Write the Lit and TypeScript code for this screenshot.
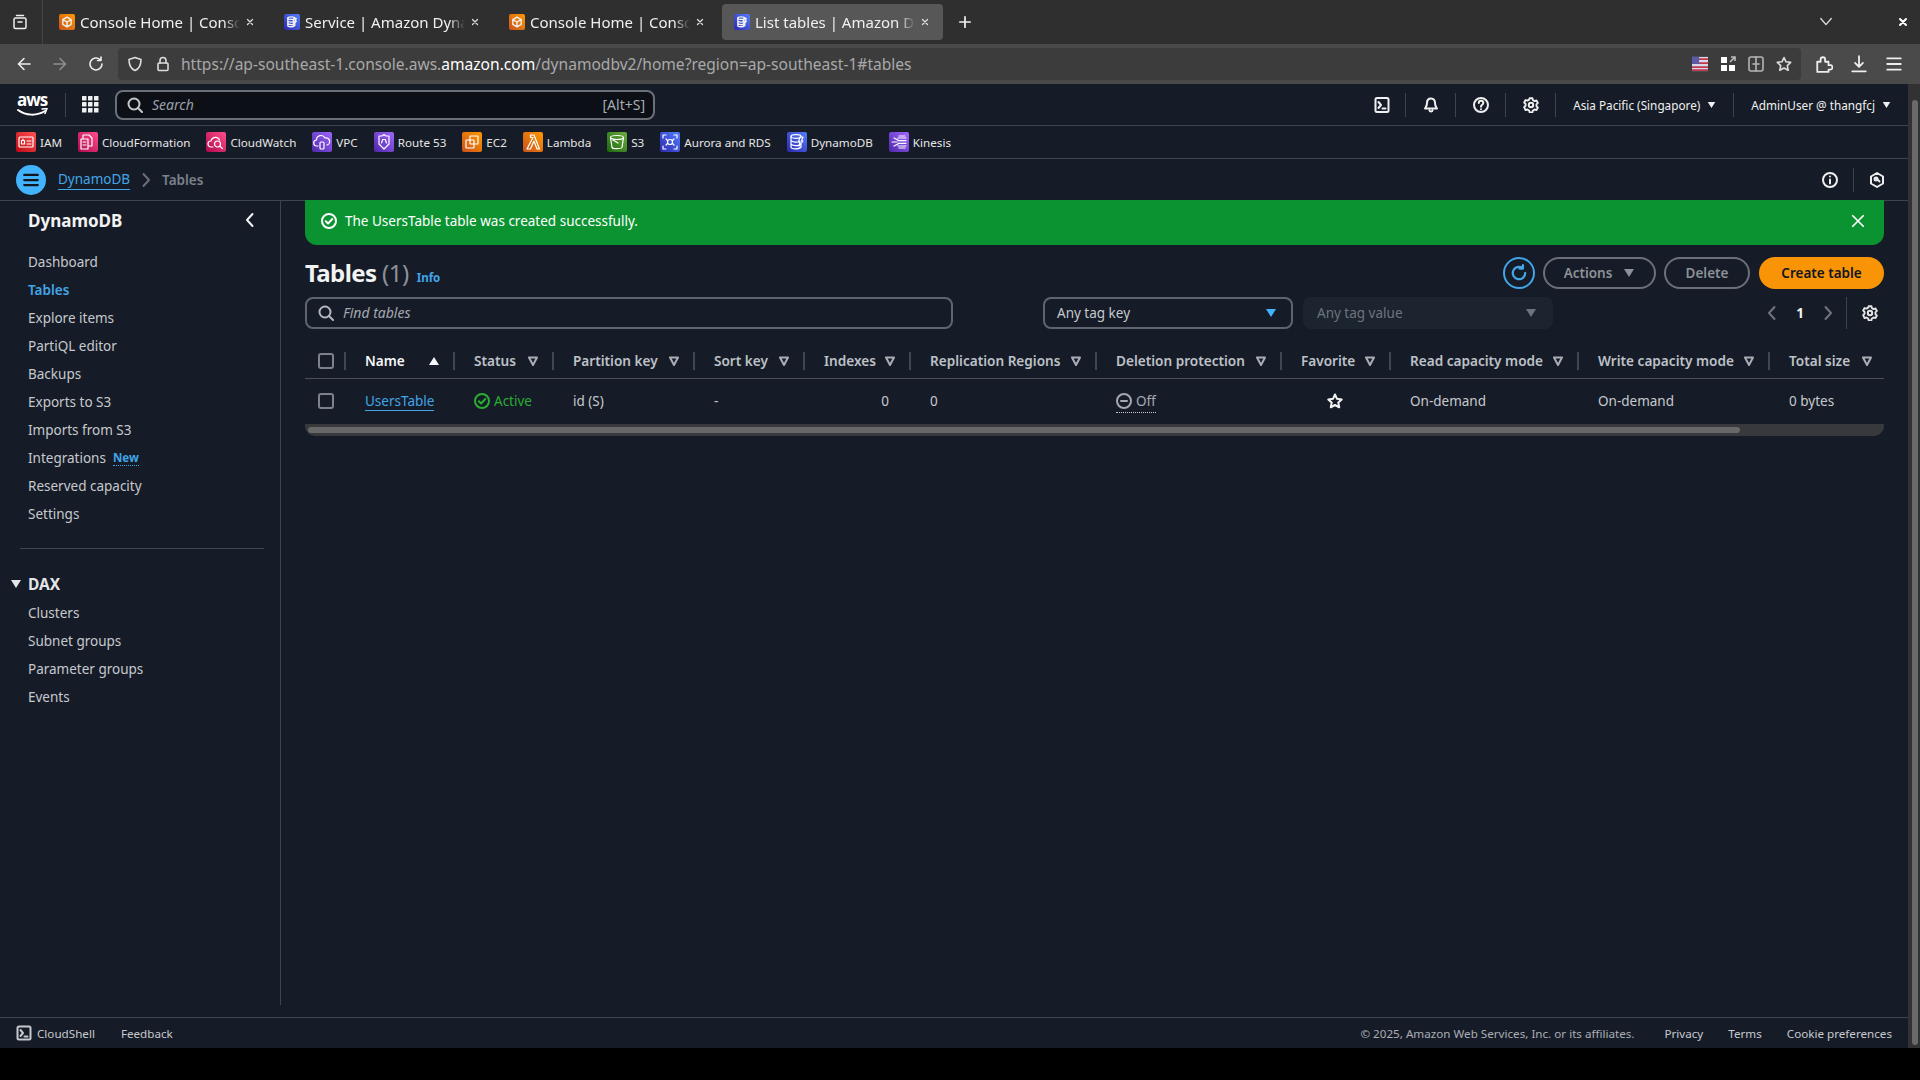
import { LitElement, html, css, svg } from "lit";
import { customElement } from "lit/decorators.js";

const ic = (body: unknown, size = 16, vb = "0 0 16 16", cls = "") =>
  html`<svg class=${cls} width=${size} height=${size} viewBox=${vb} fill="none" stroke="currentColor" stroke-width="2" stroke-linecap="round" stroke-linejoin="round">${body}</svg>`;

const glyph: Record<string, unknown> = {
  iam: svg`<rect x="3" y="5" width="14" height="10" rx="1"/><rect x="5.5" y="8.5" width="3" height="3.5"/><path d="M7 8.5V7M11 9h4M11 12h4"/>`,
  cfn: svg`<path d="M5 6V3h6l3 3v8h-3M3 7h7v10H3zM5 10h3M5 13h3"/>`,
  cw: svg`<path d="M7 15H5a3 3 0 0 1 0-6 4.5 4.5 0 0 1 8.5-1"/><circle cx="11.5" cy="12" r="3"/><path d="M14 14.5l2.5 2"/>`,
  vpc: svg`<path d="M6 14H5a3 3 0 0 1-.5-6A4.5 4.5 0 0 1 13 6a3.5 3.5 0 0 1 2 7"/><rect x="8" y="10" width="4" height="7" rx="1"/>`,
  r53: svg`<path d="M10 2.5l2 1.5h3v8l-5 5-5-5V4h3z"/><path d="M7.5 11l1.2-3.5h2.6L12.5 11"/>`,
  ec2: svg`<rect x="8" y="4" width="8" height="8" rx=".5"/><rect x="4" y="8" width="8" height="8" rx=".5"/>`,
  lam: svg`<path d="M4 17h3.5L11 9l3 8h2.5L11 3H7.5v2.5H10L4 17z"/>`,
  s3: svg`<ellipse cx="10" cy="5.5" rx="6.5" ry="2"/><path d="M3.5 5.5L5 15.5c.5 1.5 9 1.5 10 0l1.500-10M6 8l5 3"/>`,
  rds: svg`<circle cx="10" cy="10" r="2.500"/><path d="M3 6V3h3M14 3h3v3M3 14v3h3M17 14v3h-3M6 7l1.500 1.500M14 7l-1.500 1.500M6 13l1.500-1.500M14 13l-1.500-1.500"/>`,
  ddb: svg`<ellipse cx="9" cy="4.500" rx="5" ry="1.800"/><path d="M4 4.500V15c0 2.400 8 2.400 10 0V12M4 8.500c1 2 7 2 9 1M4 12c1 2 7 2 8 1M13 5l3 0-1.500 4H16l-4 5 1-4h-1.500z"/>`,
  kin: svg`<path d="M3 10h5M5 6l4 2M5 14l4-2M9 6h8M9 8.700h8M9 11.300h8M9 14h8M10 4h6M10 16h6"/>`,
  cube: svg`<path d="M10 3l6 3.500v7L10 17l-6-3.500v-7zM4 6.500l6 3.500 6-3.500M10 10v7"/>`,
};

const favs: [string, string, string][] = [
  ["IAM", "iam", "red"], ["CloudFormation", "cfn", "pink"], ["CloudWatch", "cw", "pink"],
  ["VPC", "vpc", "purple"], ["Route 53", "r53", "purple"], ["EC2", "ec2", "orange"],
  ["Lambda", "lam", "orange"], ["S3", "s3", "green"], ["Aurora and RDS", "rds", "indigo"],
  ["DynamoDB", "ddb", "indigo"], ["Kinesis", "kin", "purple"],
];

const tabs: [string, string, string, boolean][] = [
  ["Console Home | Console Home", "cube", "orange", false],
  ["Service | Amazon DynamoDB", "ddb", "indigo", false],
  ["Console Home | Console Home", "cube", "orange", false],
  ["List tables | Amazon DynamoDB", "ddb", "indigo", true],
];

const cols: [string, number][] = [
  ["Name", 109], ["Status", 99], ["Partition key", 141], ["Sort key", 110], ["Indexes", 106],
  ["Replication Regions", 186], ["Deletion protection", 185], ["Favorite", 109],
  ["Read capacity mode", 188], ["Write capacity mode", 191], ["Total size", 116],
];

const nav1 = ["Dashboard", "Tables", "Explore items", "PartiQL editor", "Backups", "Exports to S3", "Imports from S3", "Integrations", "Reserved capacity", "Settings"];
const nav2 = ["Clusters", "Subnet groups", "Parameter groups", "Events"];

const filterIcon = html`<svg class="filt" width="12" height="12" viewBox="0 0 12 12"><path d="M2 2.500h8L6 10z" fill="none" stroke="currentColor" stroke-width="2" stroke-linejoin="round"/></svg>`;
const caret = (cls = "") => html`<svg class=${cls} width="12" height="10" viewBox="0 0 12 10"><path d="M1 1h10L6 9z" fill="currentColor"/></svg>`;
const gear = (s = 16) => ic(svg`<circle cx="8" cy="8" r="2.200"/><path d="M6.500 1h3l.5 2 1.800 1 2-.6 1.500 2.600-1.500 1.500v2l1.500 1.500-1.500 2.600-2-.6-1.800 1-.5 2h-3l-.5-2-1.800-1-2 .6L.7 10.500 2.200 9V7L.7 5.500l1.500-2.600 2 .6L6 2.500z" transform="translate(.5 .3) scale(.94)"/>`, s);
const check = (s = 16) => ic(svg`<circle cx="8" cy="8" r="7"/><path d="M4.800 8.200l2.300 2.300 4.200-4.500"/>`, s);
const search = (s = 16) => ic(svg`<circle cx="7" cy="7" r="5.500"/><path d="M11 11l4 4"/>`, s);

@customElement("app-root")
export class AppRoot extends LitElement {
  static styles = css`
    :host { display: block; width: 1920px; height: 1080px; background: #000; overflow: hidden;
      font-family: "Noto Sans", sans-serif; font-size: 13.500px; color: #d1d5db; }
    * { box-sizing: border-box; }
    svg { display: block; flex: none; }
    .tabbar { height: 44px; background: #2f2f2f; display: flex; align-items: center; color: #f0f0f0; }
    .tabmgr { width: 43px; height: 44px; border-right: 1px solid #444; margin-right: 4px; display: flex; align-items: center; justify-content: center; }
    .tabmgr svg { margin-left: -2px; stroke-width: 1.500; }
    .tab { width: 225px; height: 36px; border-radius: 4px; display: flex; align-items: center; padding-left: 12px; font-size: 15px; }
    .tab.on { background: #575757; width: 221px; }
    .tab .fav { width: 16px; height: 16px; border-radius: 2px; padding: 1px; }
    .tab .tt { width: 160px; margin-left: 5px; white-space: nowrap; overflow: hidden; -webkit-mask-image: linear-gradient(90deg, #000 90%, transparent); mask-image: linear-gradient(90deg, #000 90%, transparent); }
    .tab .x { margin-left: 5px; color: #ddd; }
    .tab .x svg { width: 10px; height: 10px; stroke-width: 1.500; }
    .plus { margin-left: 16px; }
    .tabend { margin-left: auto; display: flex; align-items: center; }
    .tabend .chev { margin-right: 64px; color: #ddd; }
    .tabend .chev svg { stroke-width: 1.500; }
    .tabend .cl { margin-right: 11px; color: #fff; }

    .toolbar { height: 40px; background: #4a4a4a; display: flex; align-items: center; color: #eee; padding-left: 16px; }
    .toolbar .nav { width: 36px; display: flex; }
    .toolbar .dim { color: #8e8e8e; }
    .toolbar svg { stroke-width: 1.600; }
    .url { width: 1683px; height: 32px; margin-left: -6px; background: #3c3c3c; border-radius: 4px; display: flex; align-items: center; padding-left: 9px; color: #ddd; }
    .url .lock { margin-left: 12px; }
    .url .u { margin-left: 10px; font-size: 15.570px; color: #a9a9a9; white-space: nowrap; }
    .url .u b { font-weight: 400; color: #fff; }
    .url .ext { margin-left: auto; display: flex; align-items: center; gap: 12px; padding-right: 9px; }
    .ext svg { width: 16px; height: 16px; }
    .ext .dimx { color: #b5b5b5; }
    .tools { display: flex; align-items: center; gap: 17px; padding-left: 14px; }

    .app { height: 964px; display: flex; background: #161c27; }
    .console { width: 1908px; display: flex; flex-direction: column; }
    .vs { width: 12px; background: #323232; padding: 16px 2px 3px 4px; }
    .vs i { display: block; height: 100%; width: 6px; border-radius: 3px; background: #6a6a6a; }

    .hdr { height: 42px; flex: none; border-bottom: 1px solid #3f4550; display: flex; align-items: center; padding-left: 17px; color: #f0f0f0; }
    .aws { width: 31px; height: 30px; position: relative; color: #fff; font: 700 17px/20px "Open Sans", sans-serif; letter-spacing: -1px; }
    .aws svg { position: absolute; left: 0; top: 18px; }
    .vsep { width: 1px; height: 24px; background: #3f4550; flex: none; }
    .sb { width: 540px; height: 30px; margin-left: 16px; border: 2px solid #6b6f78; border-radius: 8px; background: #0c0f16; display: flex; align-items: center; padding: 0 8px 0 10px; color: #c6c9ce; }
    .sb em { margin-left: 9px; font-size: 14px; color: #9ba0a8; }
    .sb span { margin-left: auto; font-size: 14px; color: #a8acb3; }
    .hr { margin-left: auto; display: flex; align-items: center; font-size: 11.750px; height: 100%; }
    .hr .ib { width: 49px; display: flex; justify-content: center; }
    .hr .ib.t { width: 47px; }
    .hr .tx { display: flex; align-items: center; gap: 7px; }
    .hr .tx svg { width: 9px; height: 8px; }

    .favs { height: 33px; flex: none; border-bottom: 1px solid #3f4550; display: flex; align-items: center; padding-left: 16px; gap: 16px; font-size: 11.650px; color: #e6e6e6; }
    .f { display: flex; align-items: center; gap: 4px; white-space: nowrap; }
    .fi { width: 20px; height: 20px; border-radius: 2px; color: #fff; }
    .fi svg { width: 100%; height: 100%; stroke-width: 1.200; }
    .red { background: linear-gradient(45deg, #bd0816, #ff5252); }
    .pink { background: linear-gradient(45deg, #b0084d, #ff4f8b); }
    .purple { background: linear-gradient(45deg, #4d27a8, #a166ff); }
    .orange { background: linear-gradient(45deg, #c8511b, #ff9900); }
    .green { background: linear-gradient(45deg, #1b660f, #6cae3e); }
    .indigo { background: linear-gradient(45deg, #2e27ad, #527fff); }

    .crumb { height: 42px; flex: none; border-bottom: 1px solid #3f4550; display: flex; align-items: center; padding-left: 16px; }
    .burger { width: 30px; height: 30px; border-radius: 50%; background: #42b4ff; display: flex; align-items: center; justify-content: center; color: #10151f; }
    .crumb a { margin-left: 12px; color: #42a5e8; border-bottom: 1px solid #42a5e8; line-height: 19px; }
    .crumb .sepc { margin-left: 8px; color: #6b6f78; }
    .crumb .cur { margin-left: 8px; font-weight: 600; font-size: 13.500px; color: #7c818a; }
    .crumb .rt { margin-left: auto; display: flex; align-items: center; color: #eee; padding-right: 23px; }
    .crumb .rt .vsep { margin: 0 15px; }

    .body { flex: 1; display: flex; min-height: 0; }
    .side { width: 281px; flex: none; border-right: 1px solid #3f4550; margin-bottom: 12px; }
    .stitle { height: 38px; display: flex; align-items: center; justify-content: space-between; padding: 0 22px 0 28px; font-size: 17px; font-weight: 700; color: #f2f3f3; }
    .navl { margin-top: 9px; }
    .navl.b { margin-top: 1px; }
    .nv { height: 28px; line-height: 28px; padding-left: 28px; color: #c6c9ce; display: flex; align-items: center; }
    .nv.on { color: #42a5e8; font-weight: 600; }
    .nv u { margin-left: 7px; text-decoration: none; color: #42a5e8; font-size: 11.500px; font-weight: 700; border-bottom: 1px dotted #42a5e8; line-height: 15px; }
    .sdiv { height: 1px; margin: 20px 16px 21px 20px; background: #3f4550; }
    .dax { height: 28px; display: flex; align-items: center; font-size: 15.500px; font-weight: 700; color: #e3e5e8; padding-left: 10px; }
    .dax svg { margin-right: 6px; }

    .main { flex: 1; min-width: 0; padding: 0 24px 0 24px; }
    .banner { height: 45px; margin-top: -1px; background: #0b9332; border-radius: 0 0 12px 12px; display: flex; align-items: center; padding: 0 18px 3px 16px; color: #fff; font-size: 13.500px; }
    .banner span { margin-left: 8px; }
    .banner .cl { margin-left: auto; margin-right: 1px; }
    .ptop { display: flex; align-items: center; height: 32px; margin-top: 12px; }
    .ptitle { font-size: 24px; font-weight: 700; color: #f2f3f3; line-height: 32px; letter-spacing: -0.6px; }
    .ptitle span { font-weight: 400; color: #8d9199; letter-spacing: -0.5px; }
    .inf { margin-left: 8px; margin-top: 8px; color: #42a5e8; font-size: 11.500px; font-weight: 700; }
    .acts { margin-left: auto; display: flex; align-items: center; gap: 8px; }
    .btn { height: 32px; border: 2px solid #6b6f78; border-radius: 16px; display: flex; align-items: center; justify-content: center; font-weight: 600; font-size: 13.500px; color: #8d9199; padding-bottom: 1px; }
    .btn.ref { width: 32px; border-color: #42a5e8; color: #42a5e8; }
    .btn.act { width: 113px; gap: 11px; }
    .btn.del { width: 86px; }
    .btn.pri { width: 125px; margin-left: 1px; border: 0; background: #f89406; color: #10151f; }
    .pfil { display: flex; align-items: center; height: 32px; margin-top: 8px; font-size: 13.500px; }
    .find { width: 648px; height: 32px; border: 2px solid #5f6570; border-radius: 8px; display: flex; align-items: center; padding: 0 0 1px 11px; color: #b4b7bd; }
    .find em { margin-left: 9px; font-size: 14px; color: #a4a8af; }
    .sel { width: 250px; height: 32px; margin-left: 90px; border: 2px solid #5f6570; border-radius: 8px; display: flex; align-items: center; justify-content: space-between; padding: 0 14px 1px 12px; color: #c6c9ce; }
    .sel svg { color: #42b4ff; }
    .sel.dis { margin-left: 10px; border: 0; background: #1c2430; color: #6f747c; padding: 0 16px 1px 14px; }
    .sel.dis svg { color: #6f747c; }
    .pager { margin-left: auto; display: flex; align-items: center; height: 32px; color: #6f747c; }
    .pager b { width: 40px; text-align: center; color: #f2f3f3; font-size: 13.500px; font-weight: 700; }
    .pager .vsep { height: 32px; margin: 0 15px 0 10px; background: #3f4550; }
    .pager .g { color: #e6e6e6; margin-right: 6px; }

    .th { display: flex; height: 35px; margin-top: 15px; border-bottom: 1px solid #4a4f5a; align-items: center; }
    .c0 { width: 39px; flex: none; padding-left: 13px; display: flex; align-items: center; height: 100%; }
    .box { width: 16px; height: 16px; border: 2px solid #7c818a; border-radius: 3px; }
    .hc { flex: none; height: 18px; display: flex; align-items: center; justify-content: space-between; padding: 0 13px 0 19px; border-left: 2px solid #414752; font-weight: 600; font-size: 13.600px; line-height: 16px; color: #bdc1c7; white-space: nowrap; }
    .hc:last-child { padding-right: 11px; }
    .hc.first { color: #f5f6f7; }
    .filt { color: #a9adb4; }
    .tr { display: flex; height: 45px; align-items: center; color: #c6c9ce; padding-bottom: 1px; }
    .td { flex: none; padding-left: 21px; white-space: nowrap; display: flex; align-items: center; }
    .td.rt { justify-content: flex-end; padding-right: 20px; }
    .td a { color: #42a5e8; border-bottom: 1px solid #42a5e8; line-height: 18px; }
    .ok { color: #29ad32; gap: 4px; }
    .off { gap: 4px; color: #a4a8af; border-bottom: 1px dotted #c6c9ce; line-height: 20px; height: 24px; display: flex; align-items: center; }
    .offw { color: #8d9199; }
    .td.c { justify-content: center; padding: 0 0 0 1px; color: #f2f3f3; }
    .hbar { height: 12px; background: #38393d; border-radius: 0 0 10px 10px; padding: 3px 0 3px 3px; }
    .hbar i { display: block; height: 6px; width: 1432px; background: #686868; border-radius: 3px; }

    .foot { height: 31px; flex: none; border-top: 1px solid #3f4550; display: flex; align-items: center; padding: 0 16px; font-size: 11.650px; color: #c6c9ce; }
    .foot .cs { display: flex; align-items: center; gap: 5px; margin-right: 26px; }
    .foot .r { margin-left: auto; display: flex; gap: 25px; }
    .foot .r span:first-child { color: #a9adb4; margin-right: 5px; }
  `;

  private header() {
    return html`<div class="hdr">
      <div class="aws">aws<svg width="31" height="10" viewBox="0 0 31 10" fill="none"><path d="M1 2c8 6 19 6 27 1" stroke="#fff" stroke-width="2" stroke-linecap="round"/><path d="M25 1l5-.5-2 5" stroke="#fff" stroke-width="1.500" stroke-linecap="round"/></svg></div>
      <div class="vsep" style="margin-left:17px"></div>
      <svg style="margin-left:16px" width="17" height="17" viewBox="0 0 17 17" fill="#f0f0f0">
        ${[0, 6, 12].flatMap(y => [0, 6, 12].map(x => svg`<rect x=${x} y=${y} width="4.500" height="4.500" rx=".5"/>`))}
      </svg>
      <div class="sb">${search(16)}<em>Search</em><span>[Alt+S]</span></div>
      <div class="hr">
        <div class="ib t">${ic(svg`<rect x="1.500" y="1" width="13" height="14" rx="1.500"/><path d="M4.500 5l2.500 3-2.500 3M8.500 11.500h3"/>`)}</div><div class="vsep"></div>
        <div class="ib">${ic(svg`<path d="M8 1.500c-3 0-4 2.200-4 4.500 0 3-1 4-2 5.500h12c-1-1.500-2-2.500-2-5.500 0-2.300-1-4.500-4-4.500zM6.500 13.500c.3 1.300 2.700 1.300 3 0"/>`)}</div><div class="vsep"></div>
        <div class="ib">${ic(svg`<circle cx="8" cy="8" r="7"/><path d="M5.800 6c0-3 4.500-3 4.500 0 0 1.800-2.300 1.800-2.300 3.700"/><path d="M8 12.200v.1"/>`)}</div><div class="vsep"></div>
        <div class="ib">${gear()}</div><div class="vsep"></div>
        <div class="tx" style="padding:0 17px 0 17px">Asia Pacific (Singapore)${caret()}</div><div class="vsep"></div>
        <div class="tx" style="padding:0 17px 0 17px">AdminUser @ thangfcj${caret()}</div>
      </div>
    </div>`;
  }

  private browser() {
    return html`<div class="tabbar">
      <div class="tabmgr">${ic(svg`<rect x="2" y="4" width="12" height="10.500" rx="1.500"/><path d="M4.500 1.500h7M6 8h4"/>`, 16)}</div>
      ${tabs.map(([t, g, c, on]) => html`<div class="tab ${on ? "on" : ""}">
        <div class="fav ${c}">${ic(glyph[g], 14, "0 0 20 20")}</div>
        <div class="tt">${t}</div>
        <div class="x">${ic(svg`<path d="M3 3l6 6M9 3l-6 6"/>`, 12, "0 0 12 12")}</div>
      </div>`)}
      <div class="plus">${ic(svg`<path d="M7 1v12M1 7h12"/>`, 12, "0 0 14 14")}</div>
      <div class="tabend">
        <div class="chev">${ic(svg`<path d="M2 4l6 7 6-7"/>`, 14, "0 0 16 16")}</div>
        <div class="cl">${ic(svg`<path d="M3 3l6 6M9 3l-6 6"/>`, 12, "0 0 12 12")}</div>
      </div>
    </div>
    <div class="toolbar">
      <div class="nav">${ic(svg`<path d="M8 2.500L2.500 8 8 13.500M3 8h11"/>`)}</div>
      <div class="nav dim">${ic(svg`<path d="M8 2.500L13.500 8 8 13.500M13 8H2"/>`)}</div>
      <div class="nav">${ic(svg`<path d="M14 8a6 6 0 1 1-2-4.500M13 1v3.500H9.500"/>`)}</div>
      <div class="url">
        ${ic(svg`<path d="M8 1.500l6 2c0 5-1 9-6 11-5-2-6-6-6-11z"/>`, 16)}
        <div class="lock">${ic(svg`<rect x="3" y="7" width="10" height="7.500" rx="1"/><path d="M5 7V4.500a3 3 0 0 1 6 0V7"/>`, 16)}</div>
        <div class="u">https://ap-southeast-1.console.aws.<b>amazon.com</b>/dynamodbv2/home?region=ap-southeast-1#tables</div>
        <div class="ext">
          <svg viewBox="0 0 18 16"><rect width="18" height="16" fill="#d8d8e8"/><path d="M0 2.500h18M0 7h18M0 11.500h18M0 15h18" stroke="#c0384f" stroke-width="2"/><rect width="8" height="8" fill="#5a5aa8"/></svg>
          <svg viewBox="0 0 16 16" fill="#fff"><rect x="1" y="1" width="6" height="6"/><rect x="1" y="9" width="6" height="6"/><rect x="9" y="9" width="6" height="6"/><path d="M10 6l5-5M11 1h4v4" stroke="#bbb" fill="none"/></svg>
          ${ic(svg`<rect x="1" y="1" width="14" height="14" rx="2"/><path d="M8 1v14M5 8h6"/>`, 16, "0 0 16 16", "dimx")}
          ${ic(svg`<path d="M8 1.500l2 4.300 4.700.6-3.400 3.200.9 4.700L8 12l-4.200 2.300.9-4.700L1.300 6.400 6 5.800z"/>`, 16, "0 0 16 16")}
        </div>
      </div>
      <div class="tools">
        ${ic(svg`<path d="M2 14V6h3V4a2 2 0 0 1 4 0v2h3v3h1.500a2 2 0 0 1 0 4H12v2H2"/>`, 18, "0 0 16 16")}
        ${ic(svg`<path d="M8 1v9M4.500 7L8 10.500 11.500 7M2 14.500h12"/>`, 18, "0 0 16 16")}
        ${ic(svg`<path d="M2 3h12M2 8h12M2 13h12"/>`, 18, "0 0 16 16")}
      </div>
    </div>`;
  }

  private sidebar() {
    return html`<aside class="side">
      <div class="stitle">DynamoDB ${ic(svg`<path d="M10.500 2L5 8l5.500 6"/>`, 16)}</div>
      <div class="navl">${nav1.map(n => html`<div class="nv ${n === "Tables" ? "on" : ""}">${n}${n === "Integrations" ? html`<u>New</u>` : ""}</div>`)}</div>
      <div class="sdiv"></div>
      <div class="dax">${caret()}DAX</div>
      <div class="navl b">${nav2.map(n => html`<div class="nv">${n}</div>`)}</div>
    </aside>`;
  }

  private table() {
    return html`
      <div class="th">
        <div class="c0"><div class="box"></div></div>
        ${cols.map(([n, w], i) => html`<div class="hc ${i === 0 ? "first" : ""}" style="width:${w}px">${n}${i === 0 ? html`<svg width="12" height="10" viewBox="0 0 12 10" style="color:#f5f6f7"><path d="M1 9h10L6 1z" fill="currentColor"/></svg>` : filterIcon}</div>`)}
      </div>
      <div class="tr">
        <div class="c0"><div class="box"></div></div>
        <div class="td" style="width:109px"><a>UsersTable</a></div>
        <div class="td ok" style="width:99px">${check(16)}Active</div>
        <div class="td" style="width:141px">id (S)</div>
        <div class="td" style="width:110px">-</div>
        <div class="td rt" style="width:106px">0</div>
        <div class="td" style="width:186px">0</div>
        <div class="td offw" style="width:185px"><div class="off">${ic(svg`<circle cx="8" cy="8" r="7"/><path d="M5 8h6"/>`, 16)}Off</div></div>
        <div class="td c" style="width:109px">${ic(svg`<path d="M8 1.500l2 4.300 4.700.6-3.400 3.200.9 4.700L8 12l-4.200 2.300.9-4.700L1.300 6.400 6 5.800z"/>`, 16)}</div>
        <div class="td" style="width:188px">On-demand</div>
        <div class="td" style="width:191px">On-demand</div>
        <div class="td" style="width:116px">0 bytes</div>
      </div>
      <div class="hbar"><i></i></div>`;
  }

  private mainArea() {
    return html`<main class="main">
      <div class="banner">${check(16)}<span>The UsersTable table was created successfully.</span>
        <div class="cl">${ic(svg`<path d="M2 2l12 12M14 2L2 14"/>`, 14)}</div></div>
      <div class="ptop">
        <div class="ptitle">Tables <span>(1)</span></div><div class="inf">Info</div>
        <div class="acts">
          <div class="btn ref">${ic(svg`<path d="M13.500 8A5.500 5.500 0 1 1 11 3.400M11.500 1v3h-3"/>`, 18, "0 0 16 16")}</div>
          <div class="btn act">Actions ${caret()}</div>
          <div class="btn del">Delete</div>
          <div class="btn pri">Create table</div>
        </div>
      </div>
      <div class="pfil">
        <div class="find">${search(16)}<em>Find tables</em></div>
        <div class="sel">Any tag key ${caret()}</div>
        <div class="sel dis">Any tag value ${caret()}</div>
        <div class="pager">
          ${ic(svg`<path d="M10.500 2L5 8l5.500 6"/>`, 16)}<b>1</b>${ic(svg`<path d="M5.500 2L11 8l-5.500 6"/>`, 16)}
          <div class="vsep"></div><div class="g">${gear()}</div>
        </div>
      </div>
      ${this.table()}
    </main>`;
  }

  render() {
    return html`${this.browser()}
      <div class="app">
        <div class="console">
          ${this.header()}
          <div class="favs">${favs.map(([n, g, c]) => html`<div class="f"><div class="fi ${c}">${ic(glyph[g], 20, "0 0 20 20")}</div>${n}</div>`)}</div>
          <div class="crumb">
            <div class="burger">${ic(svg`<path d="M2 3.500h12M2 8h12M2 12.500h12"/>`, 18)}</div>
            <a>DynamoDB</a>
            <div class="sepc">${ic(svg`<path d="M5.500 2L11 8l-5.500 6"/>`, 16)}</div>
            <div class="cur">Tables</div>
            <div class="rt">
              ${ic(svg`<circle cx="8" cy="8" r="7"/><path d="M8 7.500v4M8 4.500v.1"/>`)}
              <div class="vsep"></div>
              ${ic(svg`<path d="M8 1l6 3.500v7L8 15l-6-3.500v-7z"/><path d="M7 6l3.500 3.500"/><circle cx="7" cy="7" r="1.500"/>`)}
            </div>
          </div>
          <div class="body">${this.sidebar()}${this.mainArea()}</div>
          <footer class="foot">
            <div class="cs">${ic(svg`<rect x="1.500" y="1.500" width="13" height="13" rx="1.500"/><path d="M4.500 5l2.500 3-2.500 3M8.500 11.500h3"/>`)}CloudShell</div>
            <div>Feedback</div>
            <div class="r"><span>© 2025, Amazon Web Services, Inc. or its affiliates.</span><span>Privacy</span><span>Terms</span><span>Cookie preferences</span></div>
          </footer>
        </div>
        <div class="vs"><i></i></div>
      </div>`;
  }
}
